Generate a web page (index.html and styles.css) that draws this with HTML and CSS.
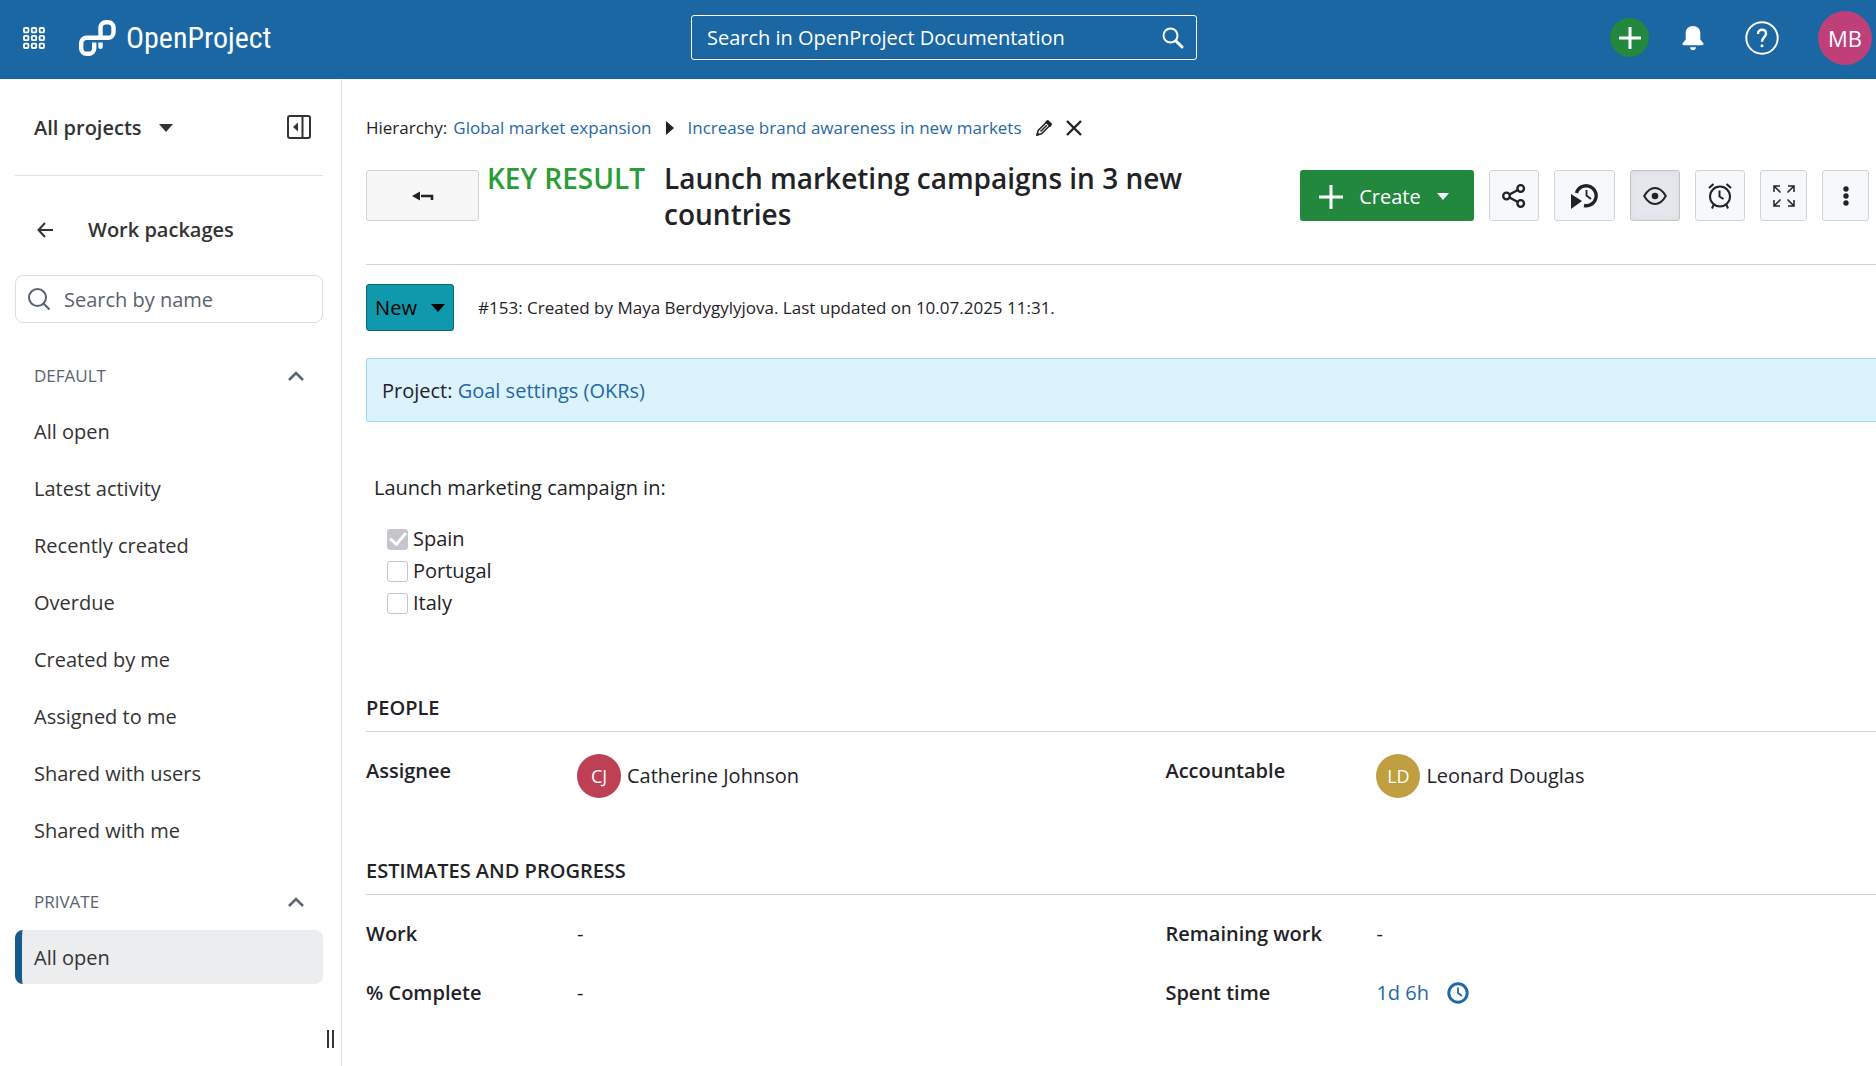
FILE: index.html
```html
<!doctype html>
<html lang="en">
	<head>
		<meta charset="utf-8">
		<title>Launch marketing campaigns in 3 new countries | OpenProject</title>
		<link rel="stylesheet" href="styles.css">
	</head>
	<body>

		<header class="top-bar">
			<div class="top-left">
				<button class="icon-btn" aria-label="Modules">
					<svg width="22" height="22" viewBox="0 0 22 22" fill="none" stroke="currentColor" stroke-width="1.8">
						<rect x="1" y="1" width="4.4" height="4.4" rx="1"/><rect x="8.8" y="1" width="4.4" height="4.4" rx="1"/><rect x="16.6" y="1" width="4.4" height="4.4" rx="1"/>
						<rect x="1" y="8.8" width="4.4" height="4.4" rx="1"/><rect x="8.8" y="8.8" width="4.4" height="4.4" rx="1"/><rect x="16.6" y="8.8" width="4.4" height="4.4" rx="1"/>
						<rect x="1" y="16.6" width="4.4" height="4.4" rx="1"/><rect x="8.8" y="16.6" width="4.4" height="4.4" rx="1"/><rect x="16.6" y="16.6" width="4.4" height="4.4" rx="1"/>
					</svg>
				</button>
				<a class="logo" href="#">
					<svg width="37" height="36" viewBox="0 0 37 36" fill="none" stroke="currentColor" stroke-width="4.4">
						<path d="M21.500 18V7.500a5.300 5.300 0 0 1 5.300-5.300h2.400a5.300 5.300 0 0 1 5.300 5.300V12.500a5.300 5.300 0 0 1-5.300 5.300H7.500a5.300 5.300 0 0 0-5.300 5.300V28.500a5.300 5.300 0 0 0 5.300 5.300h2.400a5.300 5.300 0 0 0 5.300-5.300V22.500"/>
						<path d="M19.300 22.500h4.400v4.300a2.200 2.200 0 0 1-4.400 0z" fill="currentColor" stroke="none"/>
					</svg>
					<span>OpenProject</span>
				</a>
			</div>
			<form class="top-search">
				<input type="text" placeholder="Search in OpenProject Documentation" aria-label="Search in OpenProject Documentation">
				<button type="button" class="icon-btn" aria-label="Search">
					<svg width="22" height="22" viewBox="0 0 22 22" fill="none" stroke="currentColor" stroke-width="2"><circle cx="8.500" cy="8.500" r="7"/><path d="M14 14l6 6" stroke-width="3" stroke-linecap="round"/></svg>
				</button>
			</form>
			<div class="top-right">
				<button class="quick-add" aria-label="Add">
					<svg width="22" height="22" viewBox="0 0 22 22" stroke="currentColor" stroke-width="3"><path d="M11 0v22M0 11h22"/></svg>
				</button>
				<button class="icon-btn" aria-label="Notifications">
					<svg width="22" height="26" viewBox="0 0 22 26" fill="currentColor"><path d="M11 1c-4.500 0-7.300 3-7.300 7v6.500L.8 18c-.8 1.200-.2 2.300 1.200 2.300h18c1.400 0 2-1.100 1.200-2.300l-2.900-3.500V8c0-4-2.800-7-7.300-7z"/><path d="M8 22.300h6c-.3 1.800-1.400 2.900-3 2.900s-2.700-1.100-3-2.900z"/></svg>
				</button>
				<button class="icon-btn help" aria-label="Help">
					<svg width="34" height="34" viewBox="0 0 34 34" fill="none" stroke="currentColor" stroke-width="2"><circle cx="17" cy="17" r="15.700"/><path d="M13 13c0-2.600 1.600-4.200 4-4.200s4 1.600 4 3.900c0 3.300-4 3.800-4 8" stroke-width="2.400"/><circle cx="17" cy="24.700" r="1.500" fill="currentColor" stroke="none"/></svg>
				</button>
				<button class="avatar avatar-me" aria-label="User menu">MB</button>
			</div>
		</header>

		<div class="page">
			<aside class="sidebar">
				<div class="project-row">
					<button class="project-select">All projects
						<svg width="14" height="8" viewBox="0 0 14 8" fill="currentColor"><path d="M0 0h14L7 8z"/></svg>
					</button>
					<button class="icon-btn" aria-label="Collapse menu">
						<svg width="24" height="24" viewBox="0 0 24 24" fill="none" stroke="currentColor" stroke-width="2"><rect x="1" y="1" width="22" height="22" rx="2"/><path d="M15.500 1v22"/><path d="M6 12l5-4.500v9z" fill="currentColor" stroke="none"/></svg>
					</button>
				</div>
				<div class="module-row">
					<a href="#" aria-label="Up">
						<svg width="16" height="16" viewBox="0 0 16 16" fill="none" stroke="currentColor" stroke-width="2"><path d="M8 1L1.500 8 8 15M1.500 8H16"/></svg>
					</a>
					<span>Work packages</span>
				</div>
				<label class="name-search">
					<svg width="22" height="22" viewBox="0 0 22 22" fill="none" stroke="currentColor" stroke-width="2"><circle cx="9.500" cy="9.500" r="8.500"/><path d="M15.500 15.500l6 6"/></svg>
					<input type="text" placeholder="Search by name" aria-label="Search by name">
				</label>
				<nav>
					<button class="group-title">DEFAULT
						<svg width="16" height="10" viewBox="0 0 16 10" fill="none" stroke="currentColor" stroke-width="2.500"><path d="M1 9l7-7 7 7"/></svg>
					</button>
					<ul>
						<li><a href="#">All open</a></li>
						<li><a href="#">Latest activity</a></li>
						<li><a href="#">Recently created</a></li>
						<li><a href="#">Overdue</a></li>
						<li><a href="#">Created by me</a></li>
						<li><a href="#">Assigned to me</a></li>
						<li><a href="#">Shared with users</a></li>
						<li><a href="#">Shared with me</a></li>
					</ul>
					<button class="group-title">PRIVATE
						<svg width="16" height="10" viewBox="0 0 16 10" fill="none" stroke="currentColor" stroke-width="2.500"><path d="M1 9l7-7 7 7"/></svg>
					</button>
					<ul>
						<li><a href="#" class="selected">All open</a></li>
					</ul>
				</nav>
				<div class="resizer"></div>
			</aside>

			<main>
				<div class="breadcrumb">
					<span>Hierarchy:</span>
					<a href="#">Global market expansion</a>
					<svg class="crumb-arrow" width="8" height="14" viewBox="0 0 8 14" fill="currentColor"><path d="M0 0l8 7-8 7z"/></svg>
					<a href="#">Increase brand awareness in new markets</a>
					<button class="icon-btn" aria-label="Edit parent">
						<svg width="16" height="16" viewBox="0 0 16 16" fill="none" stroke="currentColor" stroke-width="1.500"><path d="M1 15l1.200-4.500L11 1.700l3.300 3.300-8.800 8.800z"/><path d="M4.500 11.500l6.300-6.300"/><path d="M10 2l1.800-1.300 3.500 3.500L14 6z" fill="currentColor"/><path d="M0 16l1.200-4 2.800 2.800z" fill="currentColor" stroke="none"/></svg>
					</button>
					<button class="icon-btn" aria-label="Remove parent">
						<svg width="16" height="16" viewBox="0 0 16 16" stroke="currentColor" stroke-width="2.400"><path d="M1 1l14 14M15 1L1 15"/></svg>
					</button>
				</div>

				<div class="title-row">
					<button class="tool-btn back-btn" aria-label="Back">
						<svg width="22" height="10" viewBox="0 0 22 10"><path d="M0 5l8-4.500v9z" fill="currentColor"/><path d="M9 5h11v4" fill="none" stroke="currentColor" stroke-width="2.600"/></svg>
					</button>
					<div class="type">KEY RESULT</div>
					<h1>Launch marketing campaigns in 3 new countries</h1>
					<div class="toolbar">
						<button class="create-btn">
							<svg width="24" height="24" viewBox="0 0 24 24" stroke="currentColor" stroke-width="3"><path d="M12 0v24M0 12h24"/></svg>
							Create
							<svg width="12" height="7" viewBox="0 0 12 7" fill="currentColor"><path d="M0 0h12L6 7z"/></svg>
						</button>
						<button class="tool-btn" aria-label="Share">
							<svg width="24" height="24" viewBox="0 0 24 24" fill="none" stroke="currentColor" stroke-width="2.300"><circle cx="4.500" cy="12" r="3.300"/><circle cx="18.700" cy="4.500" r="3.300"/><circle cx="18.700" cy="19.500" r="3.300"/><path d="M7.500 10.500l8.300-4.500M7.500 13.500l8.300 4.500"/></svg>
						</button>
						<button class="tool-btn wide" aria-label="Start timer">
							<svg width="27" height="26" viewBox="0 0 27 26" fill="none" stroke="currentColor"><path d="M5.500 10a10 10 0 1 1 7.500 12.500" stroke-width="3.400"/><path d="M15.500 7v5.500l4.500 3.500" stroke-width="1.800"/><path d="M0 11l11 7-11 8z" fill="currentColor" stroke="none"/></svg>
						</button>
						<button class="tool-btn active" aria-label="Unwatch">
							<svg width="24" height="20" viewBox="0 0 24 20" fill="none" stroke="currentColor" stroke-width="2"><path d="M1.200 10C3.500 6 7 2 12 2s8.500 4 10.800 8c-2.300 4-5.800 8-10.800 8S3.500 14 1.200 10z"/><circle cx="12" cy="10" r="3.300" fill="currentColor" stroke="none"/></svg>
						</button>
						<button class="tool-btn" aria-label="Reminder">
							<svg width="24" height="26" viewBox="0 0 24 26" fill="none" stroke="currentColor" stroke-width="2"><circle cx="12" cy="13.500" r="10"/><path d="M11.500 7.500v6l4 2.500M1 5l4.500-4M23 5l-4.500-4M5.500 22L4 25.500M18.500 22l1.500 3.500"/></svg>
						</button>
						<button class="tool-btn narrow" aria-label="Full screen">
							<svg width="22" height="22" viewBox="0 0 22 22" fill="none" stroke="currentColor" stroke-width="1.500"><path d="M1 7V1h6M1 1l6.500 6.500M15 1h6v6M21 1l-6.500 6.500M1 15v6h6M1 21l6.500-6.500M15 21h6v-6M21 21l-6.500-6.500"/></svg>
						</button>
						<button class="tool-btn narrow" aria-label="More">
							<svg width="6" height="20" viewBox="0 0 6 20" fill="currentColor"><circle cx="3" cy="3" r="2.700"/><circle cx="3" cy="10" r="2.700"/><circle cx="3" cy="17" r="2.700"/></svg>
						</button>
					</div>
				</div>

				<div class="status-row">
					<button class="status-btn">New
						<svg width="14" height="8" viewBox="0 0 14 8" fill="currentColor"><path d="M0 0h14L7 8z"/></svg>
					</button>
					<span>#153: Created by Maya Berdygylyjova. Last updated on 10.07.2025 11:31.</span>
				</div>

				<div class="project-banner">Project: <a href="#">Goal settings (OKRs)</a></div>

				<div class="description">
					<p>Launch marketing campaign in:</p>
					<label><input type="checkbox" checked disabled>Spain</label>
					<label><input type="checkbox" disabled>Portugal</label>
					<label><input type="checkbox" disabled>Italy</label>
				</div>

				<section class="people">
					<h2>PEOPLE</h2>
					<dl>
						<div><dt>Assignee</dt><dd><span class="avatar avatar-cj">CJ</span>Catherine Johnson</dd></div>
						<div><dt>Accountable</dt><dd><span class="avatar avatar-ld">LD</span>Leonard Douglas</dd></div>
					</dl>
				</section>

				<section class="estimates">
					<h2>ESTIMATES AND PROGRESS</h2>
					<dl>
						<div><dt>Work</dt><dd>-</dd></div>
						<div><dt>Remaining work</dt><dd>-</dd></div>
						<div><dt>% Complete</dt><dd>-</dd></div>
						<div><dt>Spent time</dt><dd class="spent"><a href="#">1d 6h</a>
							<button class="icon-btn" aria-label="Log time">
								<svg width="22" height="22" viewBox="0 0 22 22" fill="none" stroke="currentColor"><circle cx="11" cy="11" r="9.200" stroke-width="3"/><path d="M11 5.500V11l4 3" stroke-width="1.800"/></svg>
							</button></dd></div>
					</dl>
				</section>
			</main>
		</div>

	</body>
</html>
```
FILE: styles.css
```css
* {
	box-sizing: border-box;
}

body {
	margin: 0;
	min-height: 100vh;
	display: flex;
	flex-direction: column;
	font-family: "Segoe UI", "Open Sans", "Noto Sans", sans-serif;
	font-size: 20px;
	line-height: 30px;
	color: #1f2328;
	background: #fff;
}

a {
	color: #1f69a5;
	text-decoration: none;
}

a:hover {
	text-decoration: underline;
}

button, input {
	font: inherit;
	color: inherit;
}

button {
	display: flex;
	align-items: center;
	justify-content: center;
	padding: 0;
	border: 0;
	background: none;
	cursor: pointer;
}

svg {
	display: block;
	flex-shrink: 0;
}

/* HEADER */
.top-bar {
	display: grid;
	grid-template-columns: 1fr 506px 1fr;
	align-items: center;
	height: 79px;
	padding: 0 4px 4px 16px;
	background: #1b67a3;
	color: #fff;
}

.top-left, .top-right, .logo {
	display: flex;
	align-items: center;
}

.top-left {
	gap: 34px;
	padding-left: 7px;
}

.logo {
	gap: 10px;
	color: #fff;
	font-family: "Liberation Sans Narrow", "Roboto Condensed", Roboto, sans-serif;
	font-size: 30px;
}

.top-search {
	display: flex;
	align-items: center;
	height: 45px;
	padding: 0 12px 0 15px;
	border: 1px solid #fff;
	border-radius: 3px;
}

.top-search input, .name-search input {
	flex: 1;
	min-width: 0;
	padding: 0;
	border: 0;
	outline: 0;
	background: none;
}

.top-search input::placeholder {
	color: #fff;
	opacity: 1;
}

.top-right {
	justify-content: flex-end;
}

.quick-add {
	width: 39px;
	height: 39px;
	margin-right: 33px;
	border-radius: 50%;
	background: #22883e;
}

.help {
	margin: 0 39px 0 41px;
}

.avatar {
	display: flex;
	align-items: center;
	justify-content: center;
	flex-shrink: 0;
	width: 44px;
	height: 44px;
	border-radius: 50%;
	color: #fff;
	font-size: 18px;
}

.avatar-me {
	width: 54px;
	height: 54px;
	font-size: 22px;
	background: #bf3f78;
}

.avatar-cj {
	background: #bf4054;
}

.avatar-ld {
	background: #bf9f40;
}

/* SIDEBAR */
.page {
	display: flex;
	flex: 1;
}

.sidebar {
	position: relative;
	width: 342px;
	flex-shrink: 0;
	padding: 0 18px 0 15px;
	border-right: 1px solid #e3e6e9;
	color: #333;
}

.project-row {
	display: flex;
	align-items: center;
	justify-content: space-between;
	height: 97px;
	padding: 0 12px 0 19px;
	border-bottom: 1px solid #dfe1e4;
}

.project-select {
	gap: 17px;
	padding-top: 2px;
	font-weight: 600;
}

.module-row {
	display: flex;
	align-items: center;
	gap: 35px;
	height: 99px;
	padding: 8px 22px 0;
	font-weight: 600;
}

.module-row a {
	color: #333;
}

.name-search {
	display: flex;
	align-items: center;
	gap: 14px;
	height: 48px;
	padding: 0 12px;
	border: 1px solid #d9dfe5;
	border-radius: 8px;
	color: #59636e;
}

.name-search input {
	padding-top: 2px;
}

.name-search input::placeholder {
	color: #59636e;
	opacity: 1;
}

.group-title {
	justify-content: space-between;
	width: 100%;
	height: 57px;
	margin-top: 24px;
	padding: 0 19px;
	color: #59636e;
	font-size: 17px;
}

.sidebar ul {
	margin: 0;
	padding: 0;
	list-style: none;
}

.sidebar li {
	margin-bottom: 3px;
}

.sidebar li a {
	display: block;
	padding: 13px 19px 11px;
	border-radius: 8px;
	color: #333;
}

.sidebar ul + .group-title {
	margin-top: 16px;
}

.sidebar li .selected {
	padding-left: 12px;
	border-left: 7px solid #175a8e;
	background: #ebedef;
}

.resizer {
	position: absolute;
	right: 7px;
	bottom: 18px;
	width: 7px;
	height: 18px;
	border: solid #333;
	border-width: 0 2px;
	cursor: col-resize;
}

/* WORK PACKAGE */
main {
	flex: 1;
	min-width: 0;
	padding: 34px 0 0 24px;
}

.breadcrumb {
	display: flex;
	align-items: center;
	gap: 14px;
	font-size: 17px;
}

.breadcrumb span {
	margin-right: -8px;
}

.title-row {
	display: flex;
	align-items: flex-start;
	padding: 18px 7px 32px 0;
	margin-top: 9px;
	border-bottom: 1px solid #cbd5dd;
}

.type, h1 {
	margin: -10px 0 0;
	font-size: 28px;
	line-height: 36px;
	font-weight: 600;
}

.type {
	margin-left: 8px;
	margin-right: 19px;
	color: #2a9d36;
	white-space: nowrap;
}

h1 {
	flex: 1;
	padding-right: 80px;
}

.toolbar {
	display: flex;
	gap: 15px;
}

.tool-btn {
	width: 50px;
	height: 51px;
	border: 1px solid #cbd5dd;
	border-radius: 3px;
	background: #f6f8fa;
}

.back-btn {
	width: 113px;
	background: #f7f7f7;
}

.wide {
	width: 61px;
}

.narrow {
	width: 47px;
}

.active {
	border-color: #c5c5c8;
	background: #e4e7ec;
	box-shadow: inset 0 0 6px #d8dbe0;
}

.create-btn {
	gap: 16px;
	width: 174px;
	height: 51px;
	padding: 2px 6px 0 0;
	border-radius: 3px;
	color: #fff;
	background: #22883e;
}

.status-row {
	display: flex;
	align-items: center;
	gap: 24px;
	margin: 19px 0 27px;
	font-size: 17px;
}

.status-btn {
	gap: 14px;
	width: 88px;
	height: 47px;
	border: 1px solid #0b6775;
	border-radius: 3px;
	background: #1098ad;
	color: #000;
	font-size: 20px;
}

.project-banner {
	padding: 17px 15px 15px;
	border: 1px solid #a5d8f8;
	border-right: 0;
	border-radius: 3px 0 0 3px;
	background: #dcf2fd;
}

.description {
	padding: 51px 8px 0;
}

.description p {
	margin: 0 0 20px;
}

.description label {
	display: flex;
	align-items: center;
	gap: 5px;
	height: 32px;
	padding-left: 13px;
}

.description input {
	appearance: none;
	display: flex;
	align-items: center;
	justify-content: center;
	width: 21px;
	height: 21px;
	margin: 0;
	border: 1px solid #c5c5cb;
	border-radius: 3px;
}

.description input:checked {
	background: #c5c5cb;
}

.description input:checked::before {
	content: "";
	width: 7px;
	height: 13px;
	margin-bottom: 4px;
	border: solid #fff;
	border-width: 0 3px 3px 0;
	transform: rotate(40deg);
}

h2 {
	margin: 0;
	padding-bottom: 8px;
	border-bottom: 1px solid #cbd5dd;
	font-size: 20px;
	line-height: 30px;
	font-weight: 600;
}

.people {
	margin-top: 74px;
}

.estimates {
	margin-top: 57px;
}

dl {
	display: grid;
	grid-template-columns: 9fr 8fr;
	margin: 0;
}

dl > div {
	display: grid;
	grid-template-columns: 211px 1fr;
	align-items: center;
	height: 59px;
}

.people dl {
	height: 67px;
	padding-top: 22px;
}

.people dl > div {
	align-items: start;
}

.estimates dl {
	padding-top: 9px;
}

dt {
	font-weight: 600;
}

.people dt {
	padding-top: 2px;
}

dd {
	display: flex;
	align-items: center;
	gap: 6px;
	margin: 0;
}

.spent {
	gap: 18px;
	color: #1f69a5;
}
```
